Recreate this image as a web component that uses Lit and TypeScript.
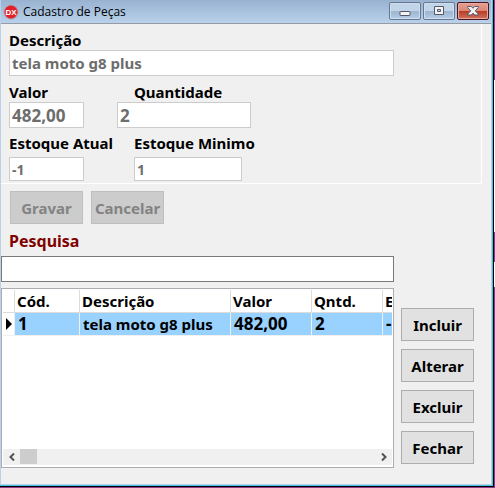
import { LitElement, html, css, svg } from "lit";
import { customElement, state } from "lit/decorators.js";

interface Part {
  code: string;
  description: string;
  value: string;
  quantity: string;
  stock: string;
}

@customElement("app-root")
export class AppRoot extends LitElement {
  static styles = css`
    :host {
      display: flex;
      box-sizing: border-box;
      min-height: 100vh;
      padding: 0 1px 1px 0;
      background: linear-gradient(#8b3a8b 80px, #ffffff 80px 232px, #8b3a8b 232px 262px, #ffffff 262px 287px, #8b3a8b 287px);
      color: #000000;
      font: bold 15px/20px "Noto Sans", "Open Sans", sans-serif;
    }
    * {
      box-sizing: border-box;
    }
    .window {
      flex: 1;
      min-width: 0;
      display: flex;
      flex-direction: column;
      background: #f0f0f0;
      border: 1px solid #000000;
      border-width: 0 1px 1px 0;
    }
    .frame {
      flex: 1;
      display: flex;
      flex-direction: column;
      border: solid #45c1e0;
      border-width: 0 1px 1px 0;
    }
    .inner {
      flex: 1;
      display: flex;
      flex-direction: column;
      border: 1px solid #b9d1ea;
      border-top: 0;
    }
    .titlebar {
      display: flex;
      align-items: center;
      height: 24px;
      padding-left: 2px;
      background: linear-gradient(#98b2d0, #b9d1ea);
      border-bottom: 1px solid #969ba3;
      font: 12px/16px "Open Sans", "Noto Sans", sans-serif;
    }
    .logo {
      width: 16px;
      height: 16px;
      margin-right: 4px;
    }
    .title {
      flex: 1;
      margin: 0;
      font: inherit;
    }
    .controls {
      display: flex;
      align-self: flex-start;
      gap: 2px;
      padding: 2px 2px 0 0;
    }
    .control {
      display: grid;
      place-items: center;
      width: 32px;
      height: 18px;
      padding: 0;
      border: 1px solid #66788f;
      border-radius: 2px;
      background: linear-gradient(#c1d4e8 50%, #9bb4cf 50%, #b5cde6);
      box-shadow: inset 0 0 0 1px #cfdeee;
    }
    .control.close {
      border-color: #4c1220;
      background: linear-gradient(#e6a092 0, #d98575 50%, #b83a20 50%, #cf7260);
      box-shadow: inset 0 0 0 1px #e5a99e;
    }
    .panel {
      display: grid;
      grid-template-columns: 125px 1fr;
      margin-right: 9px;
      padding: 6px 87px 2px 8px;
      border: solid #ffffff;
      border-width: 0 1px 1px 0;
    }
    .field {
      display: flex;
      flex-direction: column;
      align-items: flex-start;
    }
    .field.wide {
      grid-column: 1 / -1;
      margin-bottom: 6px;
    }
    .field.stock {
      gap: 4px;
      margin-top: 5px;
    }
    label {
      line-height: 20px;
    }
    input {
      width: 100%;
      height: 26px;
      margin: 0;
      padding: 0 2px;
      border: 1px solid #cccccc;
      border-radius: 0;
      background: #ffffff;
      color: #6d6d6d;
      font: inherit;
    }
    .short {
      width: 75px;
    }
    .medium {
      width: 134px;
      margin-left: -17px;
    }
    .number {
      font-size: 17px;
    }
    .small {
      height: 24px;
      font-size: 14px;
    }
    .minimum {
      width: 108px;
    }
    .actions {
      display: flex;
      gap: 8px;
      padding: 7px 9px;
    }
    .button {
      width: 73px;
      height: 33px;
      padding: 0;
      border: 1px solid #adadad;
      background: #e1e1e1;
      color: #000000;
      font: inherit;
    }
    .button:disabled {
      border-color: #bfbfbf;
      background: #cccccc;
      color: #838383;
    }
    .lower {
      flex: 1;
      display: grid;
      grid-template-columns: 1fr 73px;
      grid-template-rows: auto auto 1fr;
      column-gap: 7px;
      padding: 0 17px 16px 0;
    }
    .search-label {
      padding-left: 8px;
      color: #800000;
      font-size: 16px;
      margin-bottom: 5px;
    }
    .search {
      grid-column: 1;
      border-color: #7a7a7a;
      color: #000000;
    }
    .grid {
      grid-column: 1;
      min-width: 0;
      display: flex;
      flex-direction: column;
      margin-top: 6px;
      padding: 1px;
      border: 1px solid #abadb3;
      background: #ffffff;
    }
    .rows {
      flex: 1;
      overflow: hidden;
    }
    table {
      width: 460px;
      table-layout: fixed;
      border-collapse: separate;
      border-spacing: 0;
    }
    th,
    td {
      height: 23px;
      padding: 0 0 0 2px;
      border: solid #dcdcdc;
      border-width: 0 1px 1px 0;
      line-height: 20px;
      text-align: left;
      font-weight: bold;
      white-space: nowrap;
    }
    td {
      padding-left: 3px;
      background: #99d1ff;
      border-color: #f0f0f0;
    }
    th.marker,
    td.marker {
      padding: 0;
      background: #ffffff;
    }
    .marker svg {
      display: block;
      margin-left: 3px;
    }
    .c-marker {
      width: 12px;
    }
    .c-code {
      width: 65px;
    }
    .c-desc {
      width: 151px;
    }
    .c-value {
      width: 81px;
    }
    .c-qty {
      width: 71px;
    }
    .scroll {
      display: flex;
      height: 16px;
      margin-bottom: 1px;
      background: #f0f0f0;
    }
    .arrow {
      display: grid;
      place-items: center;
      width: 17px;
      padding: 0;
      border: 0;
      background: none;
    }
    .track {
      flex: 1;
    }
    .thumb {
      width: 17px;
      height: 15px;
      background: #cdcdcd;
    }
    .side {
      display: flex;
      flex-direction: column;
      gap: 8px;
      padding-top: 26px;
    }
  `;

  @state() private parts: Part[] = [
    { code: "1", description: "tela moto g8 plus", value: "482,00", quantity: "2", stock: "-1" },
  ];

  private logo = svg`<svg class="logo" viewBox="0 0 16 16" aria-hidden="true">
    <circle cx="8" cy="8" r="7.5" fill="#a9a5aa"/>
    <circle cx="8" cy="8" r="6.5" fill="#e31f2d"/>
    <text x="8" y="10.8" text-anchor="middle" font-family="Liberation Sans, sans-serif" font-weight="bold" font-size="8" fill="#fff">DX</text>
  </svg>`;

  render() {
    return html`
      <div class="window"><div class="frame"><div class="inner">
        <header class="titlebar">
          ${this.logo}
          <h1 class="title">Cadastro de Peças</h1>
          <div class="controls">
            <button class="control" aria-label="Minimizar">
              <svg width="12" height="12" viewBox="0 0 12 12"><rect x="1" y="6.5" width="10" height="4" rx=".5" fill="#f4f4f4" stroke="#535666"/></svg>
            </button>
            <button class="control" aria-label="Maximizar">
              <svg width="12" height="12" viewBox="0 0 12 12"><path fill-rule="evenodd" d="M1.500 1.500h9v8h-9zM4.500 4.500v2h3v-2z" fill="#f4f4f4" stroke="#535666"/></svg>
            </button>
            <button class="control close" aria-label="Fechar janela">
              <svg width="12" height="12" viewBox="0 0 12 12"><path d="M.7 1.500h3.600L6 3.300l1.700-1.800h3.600v1L8.200 5.800l3.100 3.200v1H7.700L6 8.200 4.300 10H.7V9l3.100-3.200L.7 2.500z" fill="#f4f4f4" stroke="#535666"/></svg>
            </button>
          </div>
        </header>
        <form class="panel">
          <div class="field wide">
            <label for="desc">Descrição</label>
            <input id="desc" disabled value="tela moto g8 plus" />
          </div>
          <div class="field">
            <label for="value">Valor</label>
            <input id="value" class="short number" disabled value="482,00" />
          </div>
          <div class="field">
            <label for="qty">Quantidade</label>
            <input id="qty" class="medium number" disabled value="2" />
          </div>
          <div class="field stock">
            <label for="stock">Estoque Atual</label>
            <input id="stock" class="short small" disabled value="-1" />
          </div>
          <div class="field stock">
            <label for="min">Estoque Minimo</label>
            <input id="min" class="minimum small" disabled value="1" />
          </div>
        </form>
        <div class="actions">
          <button class="button" disabled>Gravar</button>
          <button class="button" disabled>Cancelar</button>
        </div>
        <main class="lower">
          <label class="search-label" for="search">Pesquisa</label>
          <input id="search" class="search" />
          <div class="grid">
            <div class="rows">
              <table>
                <colgroup>
                  <col class="c-marker" /><col class="c-code" /><col class="c-desc" />
                  <col class="c-value" /><col class="c-qty" /><col />
                </colgroup>
                <thead>
                  <tr><th class="marker"></th><th>Cód.</th><th>Descrição</th><th>Valor</th><th>Qntd.</th><th>Estoque</th></tr>
                </thead>
                <tbody>
                  ${this.parts.map(
                    (p) => html`<tr>
                      <td class="marker"><svg width="6" height="12" viewBox="0 0 6 12"><path d="M0 0l6 6-6 6z" /></svg></td>
                      <td class="number">${p.code}</td><td>${p.description}</td><td class="number">${p.value}</td><td class="number">${p.quantity}</td><td class="number">${p.stock}</td>
                    </tr>`
                  )}
                </tbody>
              </table>
            </div>
            <div class="scroll">
              <button class="arrow" aria-label="Rolar para a esquerda">
                <svg width="8" height="8" viewBox="0 0 8 8"><path d="M6 .5L2.500 4 6 7.500" fill="none" stroke="#505050" stroke-width="2" /></svg>
              </button>
              <div class="track"><div class="thumb"></div></div>
              <button class="arrow" aria-label="Rolar para a direita">
                <svg width="8" height="8" viewBox="0 0 8 8"><path d="M2 .5L5.500 4 2 7.500" fill="none" stroke="#505050" stroke-width="2" /></svg>
              </button>
            </div>
          </div>
          <div class="side">
            <button class="button">Incluir</button>
            <button class="button">Alterar</button>
            <button class="button">Excluir</button>
            <button class="button">Fechar</button>
          </div>
        </main>
      </div></div></div>
    `;
  }
}
